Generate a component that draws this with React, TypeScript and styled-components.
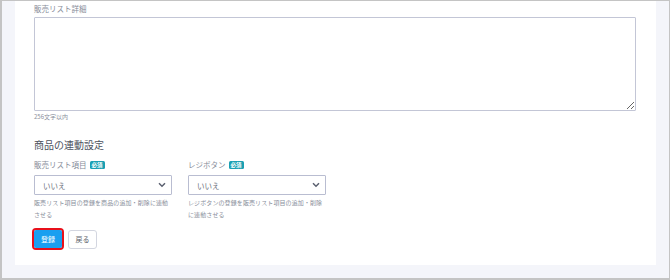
import React from "react";
import styled, { createGlobalStyle } from "styled-components";

const Global = createGlobalStyle`
  html, body { margin: 0; padding: 0; background: #fff; }
  * { box-sizing: border-box; }
  body { font-family: "Noto Sans CJK JP", "Noto Sans", sans-serif; }
`;

const Frame = styled.div`
  width: 670px;
  height: 280px;
  border: 1px solid #c4c4c4;
  border-left-width: 2px;
  border-bottom-width: 2px;
  background: #f4f5fa;
  padding: 0 13px 13px 13px;
  display: flex;
  flex-direction: column;
`;

const Card = styled.div`
  flex: 1;
  background: #ffffff;
  padding: 2px 18px 0 19px;
  display: flex;
  flex-direction: column;
`;

const Label = styled.div`
  font-size: 7.5px;
  line-height: 12px;
  color: #868b98;
  display: flex;
  align-items: center;
  gap: 3px;
`;

const TextArea = styled.textarea`
  margin-top: 2px;
  width: 602px;
  height: 94px;
  border: 1.5px solid #c3c6d6;
  border-radius: 1px;
  background: #fff;
  resize: vertical;
  outline: none;
`;

const Note = styled.div`
  font-size: 6px;
  line-height: 10px;
  color: #8a8f9c;
  margin-top: 1px;
`;

const Heading = styled.div`
  margin-top: 16px;
  font-size: 10px;
  line-height: 14px;
  color: #4d525e;
`;

const FieldRow = styled.div`
  margin-top: 7px;
  display: flex;
  gap: 16px;
`;

const Field = styled.div`
  width: 138px;
  display: flex;
  flex-direction: column;
`;

const Badge = styled.span`
  display: inline-flex;
  align-items: center;
  justify-content: center;
  width: 15px;
  height: 8.5px;
  border-radius: 1.5px;
  background: #1a9fb3;
  color: #fff;
  font-size: 5.5px;
  line-height: 8px;
  font-weight: bold;
`;

const SelectBox = styled.div`
  margin-top: 4px;
  height: 20px;
  border: 1.5px solid #b9bdd1;
  border-radius: 1px;
  display: flex;
  align-items: center;
  justify-content: space-between;
  padding: 0 5px 0 8px;
  font-size: 7.5px;
  color: #6b707c;
`;

const Help = styled.div`
  margin-top: 2px;
  font-size: 6px;
  line-height: 12px;
  color: #8a8f9c;
  letter-spacing: 0.1px;
`;

const Buttons = styled.div`
  margin-top: 7px;
  display: flex;
  align-items: center;
  gap: 4px;
`;

const Highlight = styled.div`
  border: 2.5px solid #e8101a;
  border-radius: 4px;
  margin-left: -2px;
  display: flex;
`;

const PrimaryButton = styled.button`
  width: 28px;
  height: 18px;
  border: none;
  border-radius: 2px;
  background: #1a9ff0;
  color: #fff;
  font-family: inherit;
  font-size: 7px;
  padding: 0;
`;

const SecondaryButton = styled.button`
  width: 29px;
  height: 19px;
  border: 1px solid #d3d6e0;
  border-radius: 3px;
  background: #fff;
  color: #5a5f6b;
  font-family: inherit;
  font-size: 7px;
  padding: 0;
`;

const Chevron = () => (
  <svg width="8" height="6" viewBox="0 0 8 6">
    <path d="M1 1.2 L4 4.2 L7 1.2" fill="none" stroke="#5b6070" strokeWidth="1.5" />
  </svg>
);

export default function App() {
  return (
    <>
      <Global />
      <Frame>
        <Card>
          <Label>販売リスト詳細</Label>
          <TextArea />
          <Note>256文字以内</Note>
          <Heading>商品の連動設定</Heading>
          <FieldRow>
            <Field>
              <Label>
                販売リスト項目<Badge>必須</Badge>
              </Label>
              <SelectBox>
                <span>いいえ</span>
                <Chevron />
              </SelectBox>
              <Help>販売リスト項目の登録を商品の追加・削除に連動させる</Help>
            </Field>
            <Field>
              <Label>
                レジボタン<Badge>必須</Badge>
              </Label>
              <SelectBox>
                <span>いいえ</span>
                <Chevron />
              </SelectBox>
              <Help>レジボタンの登録を販売リスト項目の追加・削除に連動させる</Help>
            </Field>
          </FieldRow>
          <Buttons>
            <Highlight>
              <PrimaryButton>登録</PrimaryButton>
            </Highlight>
            <SecondaryButton>戻る</SecondaryButton>
          </Buttons>
        </Card>
      </Frame>
    </>
  );
}
